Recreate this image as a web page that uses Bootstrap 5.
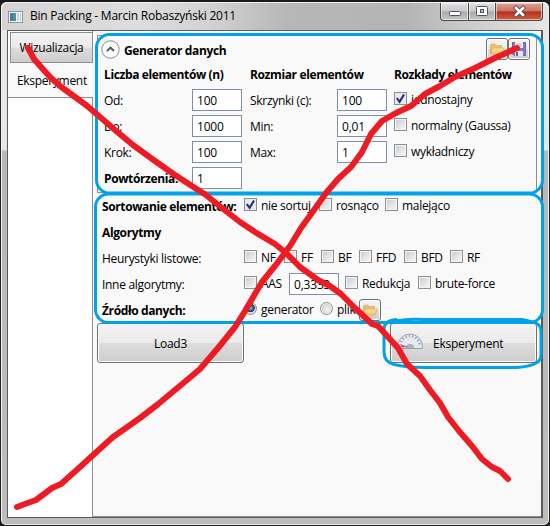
<!DOCTYPE html>
<html lang="pl">
<head>
<meta charset="utf-8">
<title>Bin Packing</title>
<link href="https://cdn.jsdelivr.net/npm/bootstrap@5.3.0/dist/css/bootstrap.min.css" rel="stylesheet">
<style>
body{width:550px;height:526px;overflow:hidden;background:#1c1a20;font:12px/16px "Open Sans","Noto Sans",sans-serif;color:#000;letter-spacing:-.3px}
svg{display:block;flex:none}
.win{width:550px;height:526px;padding:0 6px 8px;border:1px solid #222;border-top:2px solid #1a1a1e;border-radius:7px 7px 6px 6px;background:linear-gradient(#e9e7e7 0,#e6e4e4 148px,#b9b7b7 149px,#bdbdbd 100%);box-shadow:inset 1px 0 #f3f3f3,inset -1px 0 #eee,inset 0 -1px #e8e8e8,inset 0 1px #f4f4f4}
.titlebar{height:28px;margin:0 -5px;padding-left:6px;background:linear-gradient(90deg,#d4d4d4 0,#ddd 25%,#d2d2d2 38%,#b7b7b7 52%,#b4b4b4 74%,#d0d0d0 88%,#e6e6e6 100%);border-top:1px solid #f2f2f2;border-radius:6px 6px 0 0}
.caption{letter-spacing:-.24px;margin-left:7px;padding-top:5px}
.ctls{margin-right:5px}
.ctl{height:18px;border:1px solid #4a4a4a;border-top:0;background:linear-gradient(#dedede,#c9c9c9 48%,#a9a9a9 52%,#c5c5c5);box-shadow:inset 0 0 0 1px #ffffff88}
.ctl+.ctl{border-left:0}
.c-min{width:29px;border-radius:0 0 0 4px}.c-max{width:27px}
.c-close{width:47px;border-radius:0 0 4px 0;background:linear-gradient(#dda296,#cb7264 47%,#b5301c 52%,#cf5e44)}
.client{height:488px;background:#fff;border:1px solid #5a5a5a;border-right-width:2px}
.side{width:84px;flex:none;padding-top:1px}
.tab-off{height:31px;margin-left:2px;margin-right:-1px;border:1px solid #8c8e94;background:linear-gradient(#f3f3f3,#ebebeb 49%,#ddd 51%,#cdcdcd)}
.tab-on{height:35px;background:#f9f9f9;border-bottom:1px solid #8c8e94;position:relative;margin-right:-1px;padding:1px 0 0 9px}
.main{min-width:0;background:#f9f9f9;border-left:1px solid #8c8e94;border-bottom:1px solid #8c8e94;padding:4px 0 0 4px}
.expander{height:158px;width:440px;border:1px solid #8c8e94;padding:1px 6px 0}
.exphead{height:24px;margin-left:-3px}
.cap{font-weight:700;letter-spacing:-.38px;white-space:nowrap}
.hrow{height:26px}
.colhead{padding-top:2px}
.g1{width:146px}.g2{width:144px}
.lab{width:88px;white-space:nowrap;padding-top:2px}
.lab2{width:87px;white-space:nowrap;padding-top:2px}
.lab3{width:142px;white-space:nowrap;padding-top:2px}
.field{width:50px;height:22px;padding:0 0 0 4px;border:1px solid #7f8fa5;border-radius:0;background:#fff;font:inherit;line-height:18px;color:#000;letter-spacing:-.2px}
.f-aas{margin-right:6px}
.opt{height:16px;gap:4px;white-space:nowrap}
.opt input{appearance:none;width:13px;height:13px;margin:0 0 3px;flex:none;border:1px solid #8e8f8f;background:linear-gradient(135deg,#cbcfd5,#f6f6f6) content-box,#f4f4f4;padding:1px}
.opt input[type=radio]{border-radius:50%;background:radial-gradient(circle at 60% 60%,#f4f4f4,#c4c8cc) content-box,#eee}
.opt input[type=radio]:checked{background:radial-gradient(circle at 50% 45%,#9ee4f8 0,#2a87b5 25%,#0c3a5c 48%,#ddd 56%)}
.opt input[type=checkbox]:checked{background:url("data:image/svg+xml,%3Csvg xmlns='http://www.w3.org/2000/svg' viewBox='0 0 11 11'%3E%3Cpath d='M1.8 5 4.6 8.8 9 1.5' fill='none' stroke='%23232c80' stroke-width='2.1'/%3E%3C/svg%3E") center/11px no-repeat,#e8eaed}
.o40{width:40px}.o37{width:37px}.o38{width:38px}.o45{width:45px}.o46{width:46px}.o75{width:75px}.o66{width:66px}.o76{width:76px}.o73{width:73px}.o39{width:39px}
.aero{border:1px solid #707070;border-radius:3px;background:linear-gradient(#f3f3f3,#ebebeb 49%,#ddd 51%,#cdcdcd);box-shadow:inset 0 0 0 1px #fcfcfc;padding:0;color:#000;font:inherit;letter-spacing:-.26px}
.mini{width:22px;height:22px}
.big{width:147px;height:40px}
.big span{padding-top:2px}
.btnrow{width:440px}
.lower{padding-left:5px}
.marks{left:0;top:0;pointer-events:none}
</style>
<script src="https://cdn.jsdelivr.net/npm/bootstrap@5.3.0/dist/js/bootstrap.bundle.min.js"></script>
</head>
<body>
<svg width="0" height="0" class="position-absolute"><defs>
<linearGradient id="gold" x2="0" y2="1"><stop stop-color="#fbe4a0"/><stop offset="1" stop-color="#ecc06a"/></linearGradient>
<symbol id="folder" viewBox="0 0 16 16"><path d="M1.500 13V4.200l.8-1H6l1 1.300h5.500V7" fill="#e8c070" stroke="#d3a860" stroke-width=".7"/><path d="M1.500 13.200 4 7h11.400l-2.600 6.200z" fill="url(#gold)" stroke="#dcb066" stroke-width=".7"/></symbol>
</defs></svg>
<div class="win">
  <div class="titlebar d-flex align-items-start">
    <svg width="15" height="12" class="mt-2" viewBox="0 0 15 12"><rect x=".5" y=".5" width="14" height="11" fill="#f6f6f6" stroke="#8f9496"/><rect x="2" y="2" width="6" height="8" fill="#4a9a86"/><path d="M2 2h3v8H2z" fill="#4f79a8"/><path d="M9 2h2v8H9z" fill="#ccd5d8"/><path d="M12 2h1v8h-1z" fill="#b5c4d4"/></svg>
    <div class="caption">Bin Packing - Marcin Robaszyński 2011</div>
    <div class="ctls d-flex ms-auto">
      <div class="ctl c-min"><svg width="28" height="17"><rect x="8.500" y="8.500" width="11" height="4" rx="1" fill="#fff" stroke="#4e5262"/></svg></div>
      <div class="ctl c-max"><svg width="26" height="17"><rect x="7.500" y="3.500" width="11" height="9" rx="1" fill="#fff" stroke="#4e5262"/><rect x="11.500" y="6.500" width="3" height="3" fill="#bbb" stroke="#4e5262"/></svg></div>
      <div class="ctl c-close"><svg width="46" height="17"><path d="m20 5 7 7m0-7-7 7" stroke="#5b4650" stroke-width="4.400" stroke-linecap="square"/><path d="m20 5 7 7m0-7-7 7" stroke="#fff" stroke-width="2.600" stroke-linecap="square"/></svg></div>
    </div>
  </div>
  <div class="client d-flex">
    <div class="side">
      <div class="tab-off d-flex align-items-center justify-content-center">Wizualizacja</div>
      <div class="tab-on d-flex align-items-center">Eksperyment</div>
    </div>
    <div class="main flex-grow-1">
      <div class="expander">
        <div class="exphead d-flex align-items-center">
          <svg width="19" height="19"><circle cx="9.500" cy="9.500" r="8.700" fill="#fcfcfc" stroke="#8a8a8a"/><path d="m6 11 3.500-3.500L13 11" fill="none" stroke="#555" stroke-width="1.900"/></svg>
          <span class="cap ms-1 pt-1">Generator danych</span>
          <button class="aero mini ms-auto d-flex align-items-center justify-content-center"><svg width="16" height="16"><use href="#folder"/></svg></button>
          <button class="aero mini d-flex align-items-center justify-content-center"><svg width="16" height="16" viewBox="0 0 16 16"><path d="M1.500 1.500h13v13H3l-1.500-1.500z" fill="#8678bf" stroke="#6d60a8"/><path d="M4 1h8v6H4z" fill="#f3f2fa"/><path d="M5 3h6M5 5h6" stroke="#bbb"/><path d="M4 10h8v5H4z" fill="#e5e3ef"/><path d="M5 11h2v4H5z" fill="#6558a0"/></svg></button>
        </div>
        <div class="d-flex">
          <div class="g1">
            <div class="hrow colhead cap d-flex align-items-center">Liczba elementów (n)</div>
            <div class="hrow d-flex align-items-center"><span class="lab">Od:</span><input class="field" value="100"></div>
            <div class="hrow d-flex align-items-center"><span class="lab">Do:</span><input class="field" value="1000"></div>
            <div class="hrow d-flex align-items-center"><span class="lab">Krok:</span><input class="field" value="100"></div>
            <div class="hrow d-flex align-items-center"><span class="lab cap">Powtórzenia:</span><input class="field" value="1"></div>
          </div>
          <div class="g2">
            <div class="hrow colhead cap d-flex align-items-center">Rozmiar elementów</div>
            <div class="hrow d-flex align-items-center"><span class="lab2">Skrzynki (c):</span><input class="field" value="100"></div>
            <div class="hrow d-flex align-items-center"><span class="lab2">Min:</span><input class="field" value="0,01"></div>
            <div class="hrow d-flex align-items-center"><span class="lab2">Max:</span><input class="field" value="1"></div>
          </div>
          <div>
            <div class="hrow colhead cap d-flex align-items-center">Rozkłady elementów</div>
            <div class="hrow d-flex align-items-center"><label class="opt d-flex align-items-center"><input type="checkbox" checked>jednostajny</label></div>
            <div class="hrow d-flex align-items-center"><label class="opt d-flex align-items-center"><input type="checkbox">normalny (Gaussa)</label></div>
            <div class="hrow d-flex align-items-center"><label class="opt d-flex align-items-center"><input type="checkbox">wykładniczy</label></div>
          </div>
        </div>
      </div>
      <div class="lower">
        <div class="hrow d-flex align-items-center"><span class="lab3 cap">Sortowanie elementów:</span>
          <label class="opt o75 d-flex align-items-center"><input type="checkbox" checked>nie sortuj</label>
          <label class="opt o66 d-flex align-items-center"><input type="checkbox">rosnąco</label>
          <label class="opt d-flex align-items-center"><input type="checkbox">malejąco</label></div>
        <div class="hrow d-flex align-items-center"><span class="lab3 cap">Algorytmy</span></div>
        <div class="hrow d-flex align-items-center"><span class="lab3">Heurystyki listowe:</span>
          <label class="opt o40 d-flex align-items-center"><input type="checkbox">NF</label>
          <label class="opt o37 d-flex align-items-center"><input type="checkbox">FF</label>
          <label class="opt o38 d-flex align-items-center"><input type="checkbox">BF</label>
          <label class="opt o45 d-flex align-items-center"><input type="checkbox">FFD</label>
          <label class="opt o46 d-flex align-items-center"><input type="checkbox">BFD</label>
          <label class="opt d-flex align-items-center"><input type="checkbox">RF</label></div>
        <div class="hrow d-flex align-items-center"><span class="lab3">Inne algorytmy:</span>
          <label class="opt o45 d-flex align-items-center"><input type="checkbox">AAS</label>
          <input class="field f-aas" value="0,3333">
          <label class="opt o73 d-flex align-items-center"><input type="checkbox">Redukcja</label>
          <label class="opt d-flex align-items-center"><input type="checkbox">brute-force</label></div>
        <div class="hrow d-flex align-items-center"><span class="lab3 cap">Źródło danych:</span>
          <label class="opt o76 d-flex align-items-center"><input type="radio" name="src" checked>generator</label>
          <label class="opt o39 d-flex align-items-center"><input type="radio" name="src">plik</label>
          <button class="aero mini d-flex align-items-center justify-content-center"><svg width="16" height="16"><use href="#folder"/></svg></button></div>
      </div>
      <div class="btnrow d-flex justify-content-between">
        <button class="aero big d-flex align-items-center justify-content-center"><span>Load3</span></button>
        <button class="aero big d-flex align-items-center ps-1"><svg width="30" height="30" viewBox="0 0 30 30"><path d="M2.500 19a12.500 13 0 0 1 25 0v1.500h-25z" fill="#e6eaee" stroke="#98a2ab"/><path d="M5.500 17.500a9.500 9.500 0 0 1 19 0" fill="none" stroke="#8fa0ae" stroke-width="2.500" stroke-dasharray="1.200 2.200"/><path d="M11 20a4 4 0 0 1 8 0z" fill="#aab3bb"/><path d="m6 16.500 7 2.500-6.500.5z" fill="#e0386a"/></svg><span class="ms-2">Eksperyment</span></button>
      </div>
    </div>
  </div>
</div>
<svg class="marks position-absolute" width="550" height="526" fill="none" stroke-linecap="round" stroke-linejoin="round">
  <g stroke="#00a2e8" stroke-width="3">
    <rect x="96.500" y="34.500" width="446" height="158.500" rx="13"/>
    <rect x="95.500" y="194" width="447" height="128.500" rx="13"/>
    <path d="M396 319.500Q384 321 384 329V352Q384 362 394 364.500Q406 367.500 424 367.500H517Q530 366.500 536 363Q541 361 541 354V330Q540 323.500 533 322L522 319.500H424Q408 318.500 396 321"/>
  </g>
  <g stroke="#ed1c24" stroke-width="6">
    <path d="M28 48 34 59 41 67 50 77 60 86 75 97 86 105 100 117 115 130 133 145 155 161 175 175 195 188 206 195 222 208 240 222 255 232 275 244 286 253 300 267 318 280 330 286 341 294 355 308 372 324 378 326 388 337 398 348 407 364 420 376 430 390 440 403 448 417 459 431 472 446 482 459 492 467 500 471 508 479"/>
    <path d="M517 48 495 58 475 68 455 77 440 86 425 94 411 106 396 113 382 121 371 134 362 152 351 167 338 179 326 193 314 210 301 228 290 246 275 266 262 282 245 311 235 327 218 348 200 369 187 380 157 405 140 418 123 430 113 437 92 456 80 467 61 484 52 488 36 500 25 504 17 507"/>
  </g>
</svg>
</body>
</html>
